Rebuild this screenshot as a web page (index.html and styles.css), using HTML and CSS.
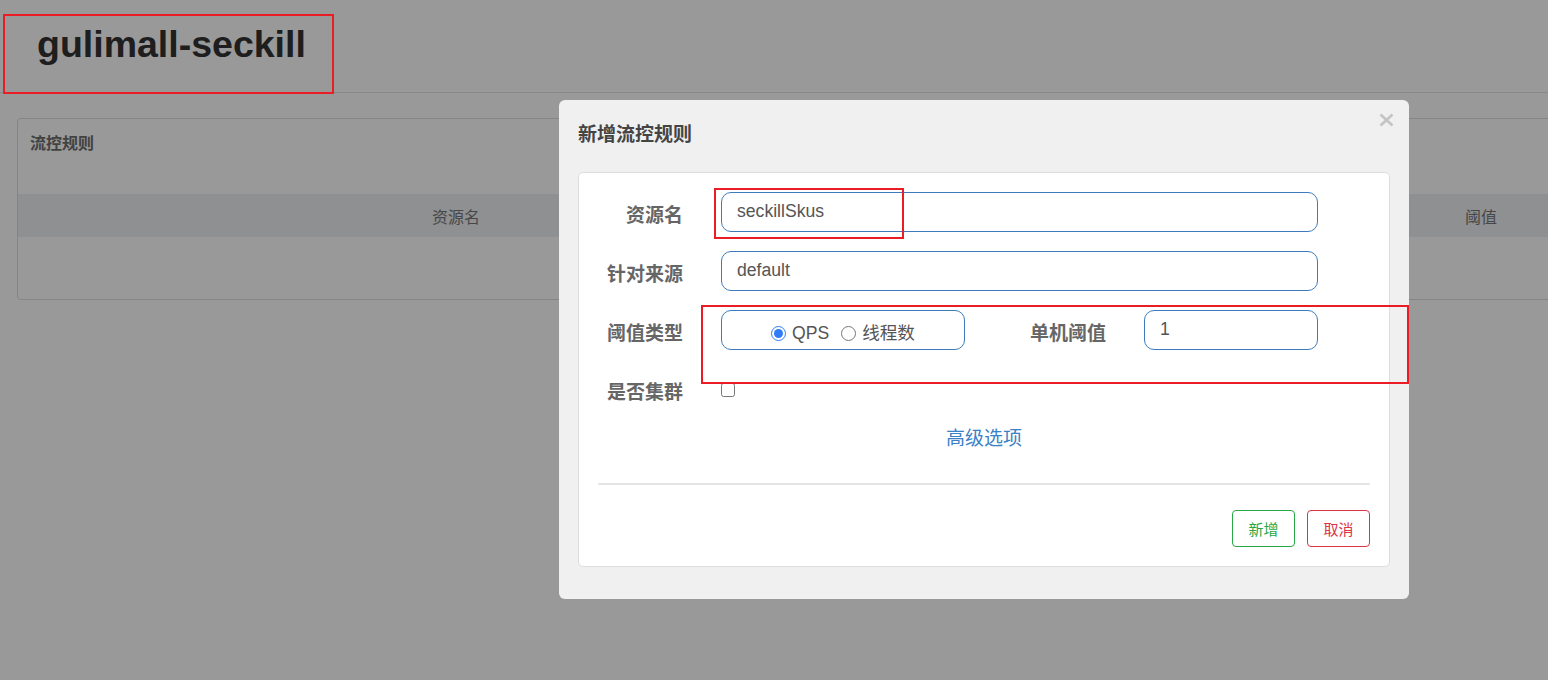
FILE: index.html
```html
<!DOCTYPE html>
<html lang="zh">
<head>
<meta charset="utf-8">
<title>gulimall-seckill</title>
<link rel="stylesheet" href="styles.css">
</head>
<body>
<div class="page">
  <header class="app-header">
    <h1 class="app-title">gulimall-seckill</h1>
  </header>
  <section class="panel">
    <div class="panel-title">流控规则</div>
    <div class="table-head">
      <div class="th th-resource">资源名</div>
      <div class="th th-fill"></div>
      <div class="th th-threshold">阈值</div>
      <div class="th th-tail"></div>
    </div>
    <div class="table-body"></div>
  </section>
</div>

<div class="backdrop"></div>

<div class="modal">
  <div class="modal-title">新增流控规则</div>
  <button class="modal-close" aria-label="close">
    <svg width="15" height="14" viewBox="0 0 15 14"><path d="M1.5 1.5 L13.5 12.5 M13.5 1.5 L1.5 12.5" stroke="#c4c4c4" stroke-width="2.6" stroke-linecap="butt" fill="none"/></svg>
  </button>
  <div class="modal-card">
    <div class="form-row">
      <label class="form-label">资源名</label>
      <div class="field-wide"><input class="text-input" type="text" value="seckillSkus"></div>
    </div>
    <div class="form-row">
      <label class="form-label">针对来源</label>
      <div class="field-wide"><input class="text-input" type="text" value="default"></div>
    </div>
    <div class="form-row">
      <label class="form-label">阈值类型</label>
      <div class="radio-group">
        <label class="radio-item"><input type="radio" name="grade" checked><span>QPS</span></label>
        <label class="radio-item"><input type="radio" name="grade"><span>线程数</span></label>
      </div>
      <label class="form-label label-inline">单机阈值</label>
      <div class="field-small"><input class="text-input" type="text" value="1"></div>
    </div>
    <div class="form-row">
      <label class="form-label">是否集群</label>
      <div class="check-wrap"><input class="check" type="checkbox"></div>
    </div>
    <div class="advanced"><a class="advanced-link">高级选项</a></div>
    <div class="divider"></div>
    <div class="actions">
      <button class="btn btn-green">新增</button>
      <button class="btn btn-red">取消</button>
    </div>
  </div>
</div>

<div class="mark mark-title"></div>
<div class="mark mark-resource"></div>
<div class="mark mark-grade"></div>
</body>
</html>
```

FILE: styles.css
```css
html, body {
  margin: 0;
  padding: 0;
}
body {
  width: 1548px;
  height: 680px;
  overflow: hidden;
  background: #fff;
  font-family: "Liberation Sans", "Noto Sans CJK SC", sans-serif;
  color: #333;
  position: relative;
}
.page {
  width: 1548px;
}
.app-header {
  height: 92px;
  border-bottom: 1px solid #e3e3e3;
  box-sizing: border-box;
  height: 93px;
}
.app-title {
  margin: 0;
  padding: 22px 0 0 37px;
  font-size: 37.5px;
  line-height: 44px;
  font-weight: bold;
  color: #333;
}
.panel {
  margin: 25px 0 0 17px;
  width: 1545px;
  border: 1px solid #dedede;
  border-radius: 4px;
  background: #fff;
  box-sizing: border-box;
}
.panel-title {
  height: 75px;
  padding: 14px 0 0 12px;
  box-sizing: border-box;
  font-size: 16px;
  line-height: 22px;
  font-weight: bold;
  color: #6e6e6e;
}
.table-head {
  display: flex;
  height: 43px;
  background: #eef0f3;
  align-items: center;
}
.th {
  font-size: 16px;
  color: #777;
  text-align: center;
}
.th-resource { width: 876px; }
.th-fill { flex: 1; }
.th-threshold { width: 100px; }
.th-tail { width: 30px; }
.table-body {
  height: 62px;
}

.backdrop {
  position: absolute;
  inset: 0;
  background: rgba(0, 0, 0, 0.4);
}

.modal {
  position: absolute;
  left: 559px;
  top: 100px;
  width: 850px;
  height: 499px;
  box-sizing: border-box;
  background: #f0f0f0;
  border-radius: 6px;
  padding: 22px 19px 0 19px;
}
.modal-title {
  font-size: 19px;
  line-height: 22px;
  font-weight: bold;
  color: #444;
  font-family: "Noto Sans CJK SC", sans-serif;
}
.modal-close {
  position: absolute;
  top: 12px;
  left: 819px;
  width: 16px;
  height: 16px;
  padding: 0;
  border: 0;
  background: none;
  display: flex;
  align-items: center;
  justify-content: center;
}
.modal-card {
  margin-top: 28px;
  background: #fff;
  border: 1px solid #ddd;
  border-radius: 5px;
  padding: 19px 19px 19px 19px;
}
.form-row {
  display: flex;
  height: 40px;
  margin-bottom: 19px;
  align-items: stretch;
}
.form-label {
  width: 85px;
  flex: none;
  margin-right: 38px;
  display: flex;
  justify-content: flex-end;
  align-items: center;
  padding-top: 3px;
  box-sizing: border-box;
  font-family: "Noto Sans CJK SC", sans-serif;
  font-size: 19px;
  font-weight: bold;
  color: #666;
  white-space: nowrap;
}
.label-inline {
  width: 141px;
}
.field-wide {
  width: 597px;
}
.field-small {
  width: 174px;
}
.text-input {
  width: 100%;
  height: 40px;
  box-sizing: border-box;
  border: 1px solid #3d7bbd;
  border-radius: 10px;
  padding: 0 15px 2px 15px;
  font-family: "Liberation Sans", "Noto Sans CJK SC", sans-serif;
  font-size: 17.6px;
  color: #555;
  background: #fff;
  outline: none;
}
.radio-group {
  width: 244px;
  flex: none;
  box-sizing: border-box;
  border: 1px solid #3d7bbd;
  border-radius: 10px;
  display: flex;
  justify-content: center;
  align-items: center;
  padding-top: 6px;
  gap: 12px;
}
.radio-item {
  display: flex;
  align-items: center;
  font-size: 17.6px;
  color: #555;
}
.radio-item input {
  width: 15px;
  height: 15px;
  margin: 0 6px 0 0;
  accent-color: #2f7cf6;
}
.radio-item span {
  line-height: 20px;
}
.check-wrap {
  display: flex;
  align-items: center;
  padding-top: 2px;
}
.check {
  width: 14px;
  height: 14px;
  margin: 0;
}
.advanced {
  margin-top: -3px;
  text-align: center;
  height: 24px;
  line-height: 24px;
}
.advanced-link {
  font-family: "Noto Sans CJK SC", sans-serif;
  font-size: 19px;
  color: #3b81c6;
  cursor: pointer;
}
.divider {
  margin-top: 34px;
  height: 2px;
  background: #e5e5e5;
}
.actions {
  margin-top: 25px;
  display: flex;
  justify-content: flex-end;
  gap: 12px;
}
.btn {
  width: 63px;
  height: 37px;
  box-sizing: border-box;
  background: #fff;
  border-radius: 4px;
  font-family: "Noto Sans CJK SC", sans-serif;
  font-size: 15px;
  padding: 0;
  display: flex;
  align-items: center;
  justify-content: center;
}
.btn-green {
  border: 1px solid #28a745;
  color: #28a745;
}
.btn-red {
  border: 1px solid #dc3545;
  color: #dc3545;
}

.mark {
  position: absolute;
  border: 2px solid #ea1c24;
  box-sizing: border-box;
}
.mark-title {
  left: 3px;
  top: 14px;
  width: 331px;
  height: 80px;
}
.mark-resource {
  left: 714px;
  top: 188px;
  width: 190px;
  height: 51px;
}
.mark-grade {
  left: 701px;
  top: 305px;
  width: 708px;
  height: 79px;
}
```
